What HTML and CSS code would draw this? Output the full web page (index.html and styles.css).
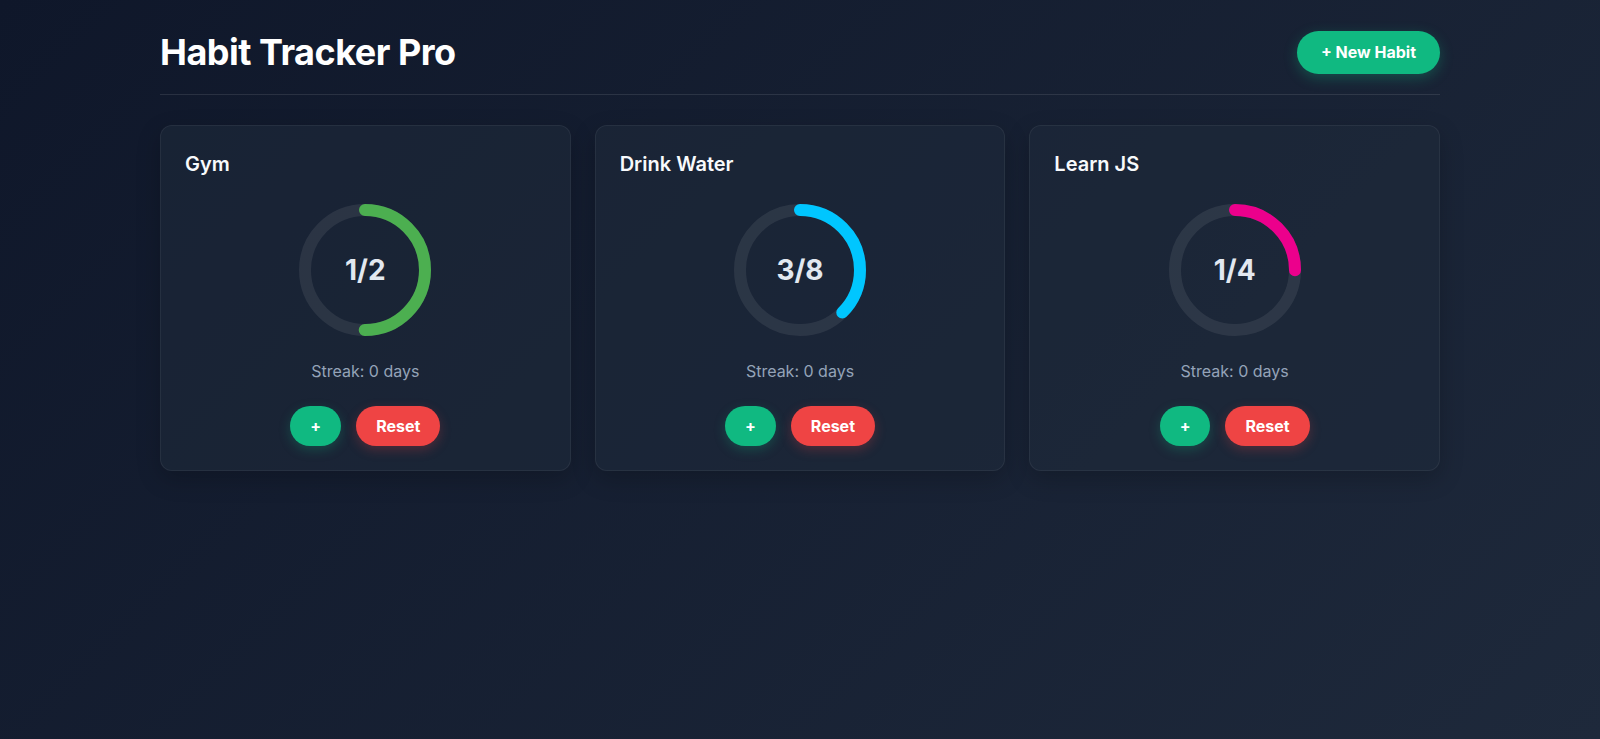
FILE: index.html
```html
<!DOCTYPE html>
<html lang="en">
<head>
    <meta charset="UTF-8">
    <meta name="viewport" content="width=device-width, initial-scale=1.0">
    <title>Habit Tracker Pro</title>
    <link rel="stylesheet" href="styles.css">
</head>
<body>
    <div class="app">
        <header class="app-header">
            <h1>Habit Tracker Pro</h1>
            <button class="btn btn-add">+ New Habit</button>
        </header>

        <div class="habit-grid">
            <div class="habit-card">
                <h3 class="habit-name">Gym</h3>
                <div class="ring">
                    <svg width="140" height="140" viewBox="0 0 140 140">
                        <circle class="ring-track" cx="70" cy="70" r="60"></circle>
                        <circle class="ring-bar" cx="70" cy="70" r="60" stroke="#4caf50"
                                stroke-dasharray="376.99" stroke-dashoffset="188.5"></circle>
                    </svg>
                    <div class="ring-label">1/2</div>
                </div>
                <div class="streak">Streak: 0 days</div>
                <div class="actions">
                    <button class="btn btn-inc">+</button>
                    <button class="btn btn-reset">Reset</button>
                </div>
            </div>

            <div class="habit-card">
                <h3 class="habit-name">Drink Water</h3>
                <div class="ring">
                    <svg width="140" height="140" viewBox="0 0 140 140">
                        <circle class="ring-track" cx="70" cy="70" r="60"></circle>
                        <circle class="ring-bar" cx="70" cy="70" r="60" stroke="#00c6ff"
                                stroke-dasharray="376.99" stroke-dashoffset="235.62"></circle>
                    </svg>
                    <div class="ring-label">3/8</div>
                </div>
                <div class="streak">Streak: 0 days</div>
                <div class="actions">
                    <button class="btn btn-inc">+</button>
                    <button class="btn btn-reset">Reset</button>
                </div>
            </div>

            <div class="habit-card">
                <h3 class="habit-name">Learn JS</h3>
                <div class="ring">
                    <svg width="140" height="140" viewBox="0 0 140 140">
                        <circle class="ring-track" cx="70" cy="70" r="60"></circle>
                        <circle class="ring-bar" cx="70" cy="70" r="60" stroke="#ec008c"
                                stroke-dasharray="376.99" stroke-dashoffset="282.74"></circle>
                    </svg>
                    <div class="ring-label">1/4</div>
                </div>
                <div class="streak">Streak: 0 days</div>
                <div class="actions">
                    <button class="btn btn-inc">+</button>
                    <button class="btn btn-reset">Reset</button>
                </div>
            </div>
        </div>
    </div>
</body>
</html>
```

FILE: styles.css
```css
html, body {
    margin: 0;
    min-height: 100%;
}

body {
    font-family: Inter, 'Noto Sans', sans-serif;
    background: linear-gradient(135deg, #0f172a, #1e293b);
    color: #f1f5f9;
    min-height: 100vh;
}

.app {
    max-width: 1280px;
    margin: 0 auto;
    padding-top: 31px;
}

.app-header {
    display: flex;
    justify-content: space-between;
    align-items: center;
    padding-bottom: 20px;
    border-bottom: 1px solid rgba(255, 255, 255, 0.1);
}

.app-header h1 {
    margin: 0;
    font-size: 36px;
    line-height: 43px;
    font-weight: 700;
    letter-spacing: -0.5px;
    color: #fff;
}

.btn {
    font-family: inherit;
    border: none;
    border-radius: 999px;
    color: #fff;
    font-weight: 700;
    cursor: pointer;
}

.btn-add {
    background: #10b981;
    font-size: 16px;
    padding: 12px 24px;
    line-height: 19px;
    box-shadow: 0 4px 14px rgba(16, 185, 129, 0.3);
}

.habit-grid {
    display: grid;
    grid-template-columns: repeat(3, 1fr);
    gap: 24px;
    margin-top: 30px;
}

.habit-card {
    background: rgba(30, 41, 59, 0.6);
    border: 1px solid rgba(255, 255, 255, 0.06);
    border-radius: 12px;
    padding: 26px 24px 24px;
    box-shadow: 0 8px 24px rgba(0, 0, 0, 0.2);
    display: flex;
    flex-direction: column;
    align-items: center;
}

.habit-name {
    align-self: flex-start;
    margin: 0;
    font-size: 20px;
    line-height: 24px;
    font-weight: 600;
    color: #f8fafc;
}

.ring {
    position: relative;
    width: 140px;
    height: 140px;
    margin-top: 24px;
}

.ring svg {
    display: block;
    transform: rotate(-90deg);
}

.ring circle {
    fill: none;
    stroke-width: 12;
}

.ring-track {
    stroke: rgba(255, 255, 255, 0.08);
}

.ring-bar {
    stroke-linecap: round;
}

.ring-label {
    position: absolute;
    inset: 0;
    display: flex;
    align-items: center;
    justify-content: center;
    font-size: 28px;
    font-weight: 700;
    color: #e2e8f0;
}

.streak {
    margin-top: 19px;
    font-size: 16px;
    line-height: 24px;
    color: #94a3b8;
}

.actions {
    display: flex;
    gap: 15px;
    margin-top: 23px;
}

.btn-inc,
.btn-reset {
    font-size: 16px;
    line-height: 20px;
    padding: 10px 20px;
}

.btn-inc {
    background: #10b981;
    box-shadow: 0 4px 12px rgba(16, 185, 129, 0.25);
}

.btn-reset {
    background: #ef4444;
    box-shadow: 0 4px 12px rgba(239, 68, 68, 0.25);
}
```
